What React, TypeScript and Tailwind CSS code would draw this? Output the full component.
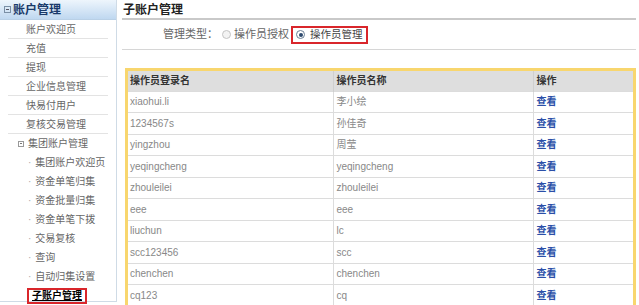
import clsx from 'clsx';

const font = { fontFamily: '"Liberation Sans", "Noto Sans CJK SC", sans-serif' };

const topItems = ['账户欢迎页', '充值', '提现', '企业信息管理', '快易付用户', '复核交易管理'];
const groupItems = ['集团账户欢迎页', '资金单笔归集', '资金批量归集', '资金单笔下拨', '交易复核', '查询', '自动归集设置'];

const rows = [
  ['xiaohui.li', '李小绘'],
  ['1234567s', '孙佳奇'],
  ['yingzhou', '周莹'],
  ['yeqingcheng', 'yeqingcheng'],
  ['zhouleilei', 'zhouleilei'],
  ['eee', 'eee'],
  ['liuchun', 'lc'],
  ['scc123456', 'scc'],
  ['chenchen', 'chenchen'],
  ['cq123', 'cq'],
];

const Sidebar = () => (
  <aside className="w-[117px] h-[302px] shrink-0 border-r border-b border-[#cfdbe6] bg-white">
    <div className="h-[20px] flex items-center pl-[4px] gap-[2px] bg-gradient-to-b from-[#eef5fc] to-[#bfd8f0] border-b border-[#b9d0e6]">
      <span className="w-[7px] h-[7px] border border-[#7a8fa5] flex items-center justify-center">
        <span className="w-[3px] h-px bg-[#556]" />
      </span>
      <span className="text-[12px] font-bold text-[#1a3a6a]">账户管理</span>
    </div>
    <div className="px-[8px]">
      {topItems.map((t) => (
        <div key={t} className="h-[19px] flex items-center pl-[18px] text-[10px] text-[#666] border-b border-[#e3e3e3]">
          {t}
        </div>
      ))}
      <div className="h-[19px] flex items-center pl-[10px] gap-[4px] text-[10px] text-[#666]">
        <span className="w-[6px] h-[6px] border border-[#999] flex items-center justify-center">
          <span className="w-[2px] h-px bg-[#777]" />
        </span>
        集团账户管理
      </div>
      {groupItems.map((t) => (
        <div key={t} className="h-[19px] flex items-center pl-[20px] gap-[4px] text-[10px] text-[#666]">
          <span className="text-[#aaa]">·</span>
          {t}
        </div>
      ))}
      <div className="h-[19px] flex items-center pl-[19px]">
        <span className="border-2 border-[#d9262b] px-[3px] h-[16px] flex items-center text-[10px] font-bold text-black underline">
          子账户管理
        </span>
      </div>
    </div>
  </aside>
);

const Radio = ({ checked }: { checked?: boolean }) => (
  <span
    className={clsx(
      'w-[9px] h-[9px] rounded-full border flex items-center justify-center',
      checked ? 'border-[#6a7f95] bg-white' : 'border-[#c4c4c4] bg-[#f3f3f3]',
    )}
  >
    {checked && <span className="w-[4px] h-[4px] rounded-full bg-[#2d4a6e]" />}
  </span>
);

export default function App() {
  return (
    <div className="flex w-[639px] h-[305px] overflow-hidden bg-white" style={font}>
      <Sidebar />
      <main className="flex-1 pl-[5px] pr-[3px] pt-[2px]">
        <div className="h-[15px] flex items-center pl-[1px] text-[12px] font-bold text-[#222]">子账户管理</div>
        <div className="h-[2px] bg-[#c9c9c9] mt-[1px]" />
        <div className="h-[29px] flex items-center pl-[41px] text-[11px] text-[#666]">
          <span className="mr-[4px]">管理类型：</span>
          <Radio />
          <span className="ml-[3px] mr-[2px]">操作员授权</span>
          <span className="h-[18px] border-2 border-[#d9262b] flex items-center pl-[3px] pr-[3px] gap-[5px]">
            <Radio checked />
            <span className="text-[#444] text-[10.5px]">操作员管理</span>
          </span>
        </div>
        <div className="h-px bg-[#d6d6d6]" />
        <div className="mt-[18px] ml-[3px] border-[3px] border-[#f8d66e] h-[240px] overflow-hidden">
          <table className="w-full border-collapse text-[10px]">
            <colgroup>
              <col className="w-[205px]" />
              <col className="w-[200px]" />
              <col />
            </colgroup>
            <thead>
              <tr className="h-[20px] bg-[#dedede] text-[#333] font-bold">
                <th className="text-left pl-[2px] font-bold">操作员登录名</th>
                <th className="text-left pl-[3px] font-bold border-l border-[#cfcfcf]">操作员名称</th>
                <th className="text-left pl-[3px] font-bold border-l border-[#cfcfcf]">操作</th>
              </tr>
            </thead>
            <tbody>
              {rows.map(([login, name]) => (
                <tr key={login} className="h-[21.5px] border-t border-[#dcdcdc] text-[#888]">
                  <td className="pl-[2px]">{login}</td>
                  <td className="pl-[3px] border-l border-[#dcdcdc]">{name}</td>
                  <td className="pl-[3px] border-l border-[#dcdcdc] text-[#2b4fa8] font-bold">查看</td>
                </tr>
              ))}
            </tbody>
          </table>
        </div>
      </main>
    </div>
  );
}
